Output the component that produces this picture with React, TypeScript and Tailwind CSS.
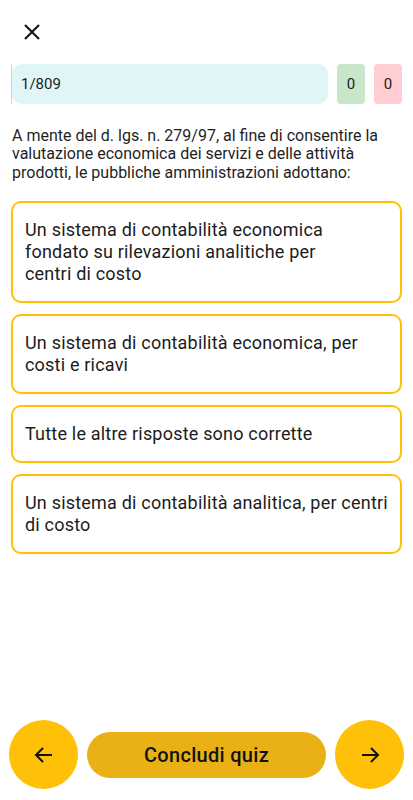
import React from "react";

const options: string[][] = [
  ["Un sistema di contabilità economica", "fondato su rilevazioni analitiche per", "centri di costo"],
  ["Un sistema di contabilità economica, per", "costi e ricavi"],
  ["Tutte le altre risposte sono corrette"],
  ["Un sistema di contabilità analitica, per centri", "di costo"],
];

export default function App() {
  return (
    <div
      className="w-[413px] h-[800px] bg-white flex flex-col text-[#1c1c1c]"
      style={{ fontFamily: "Roboto, 'Noto Sans', sans-serif" }}
    >
      <div className="h-[64px] flex items-center pl-[20px]">
        <svg width="24" height="24" viewBox="0 0 24 24" fill="none">
          <path d="M5 5L19 19M19 5L5 19" stroke="#111" strokeWidth="2" />
        </svg>
      </div>
      <div className="flex items-center pl-[11px] pr-[11px] h-[40px]">
        <div className="w-[1px] h-full bg-[#f5d26a]" />
        <div className="flex-1 h-full bg-[#dff5f8] rounded-[10px] flex items-center pl-[9px] text-[15px]">
          1/809
        </div>
        <div className="ml-[9px] w-[28px] h-full bg-[#c8e6c9] rounded-[4px] flex items-center justify-center text-[15px]">
          0
        </div>
        <div className="ml-[9px] w-[28px] h-full bg-[#ffcdd2] rounded-[4px] flex items-center justify-center text-[15px]">
          0
        </div>
      </div>
      <p className="mt-[23px] px-[12px] text-[16px] leading-[18.3px] text-[#1f1f1f]">
        A mente del d. lgs. n. 279/97, al fine di consentire la valutazione economica dei servizi e delle attività prodotti, le pubbliche amministrazioni adottano:
      </p>
      <div className="mt-[19px] px-[11px] flex flex-col gap-[11px]">
        {options.map((lines) => (
          <div
            key={lines[0]}
            className="border-[2px] border-[#ffc107] rounded-[10px] pl-[12px] pr-[10px] py-[16px] text-[18px] leading-[22px] tracking-[0.2px]"
          >
            {lines.map((l) => (
              <span key={l} className="block whitespace-nowrap">
                {l}
              </span>
            ))}
          </div>
        ))}
      </div>
      <div className="flex-1" />
      <div className="flex items-center justify-between px-[9px] pb-[11px]">
        <div className="w-[69px] h-[69px] rounded-full bg-[#ffc107] flex items-center justify-center">
          <svg width="20" height="16" viewBox="0 0 20 16" fill="none">
            <path d="M18 8H2M9 1L2 8L9 15" stroke="#111" strokeWidth="2" />
          </svg>
        </div>
        <div className="w-[239px] h-[46px] rounded-full bg-[#e9b116] flex items-center justify-center text-[20px] font-medium tracking-[0.3px] text-[#111]">
          Concludi quiz
        </div>
        <div className="w-[69px] h-[69px] rounded-full bg-[#ffc107] flex items-center justify-center">
          <svg width="20" height="16" viewBox="0 0 20 16" fill="none">
            <path d="M2 8H18M11 1L18 8L11 15" stroke="#111" strokeWidth="2" />
          </svg>
        </div>
      </div>
    </div>
  );
}
